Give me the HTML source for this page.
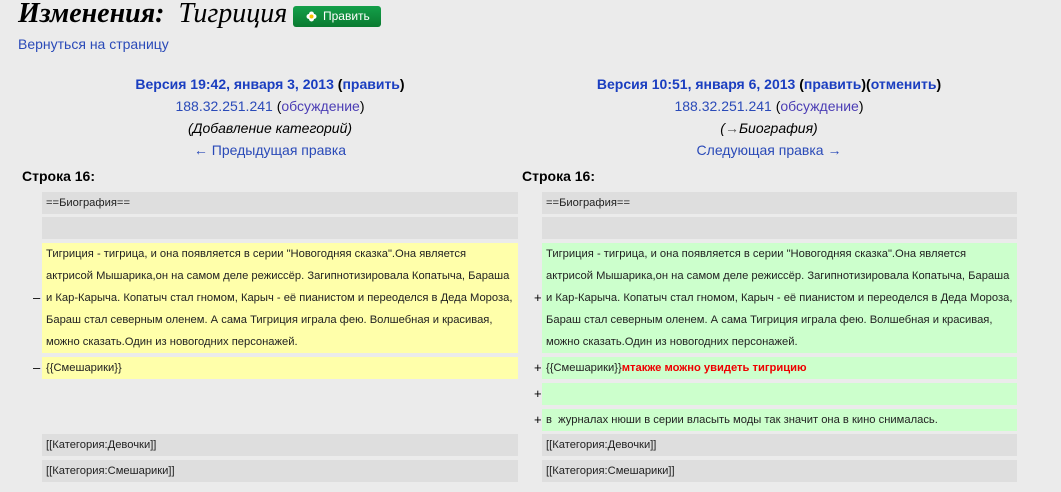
<!DOCTYPE html>
<html><head><meta charset="utf-8"><style>
body{margin:0;width:1061px;height:492px;background:#ebebeb;font-family:"Liberation Sans",Arial,sans-serif;position:relative;overflow:hidden;color:#000}
.a{position:absolute}
h1{position:absolute;left:18px;top:-2px;margin:0;font-family:"Liberation Serif",serif;font-style:italic;font-weight:normal;font-size:28px;white-space:nowrap}
.btn{position:absolute;left:293px;top:6px;width:88px;height:21px;background:linear-gradient(#14a04a,#0a7a30);border-radius:3px;color:#fff;font-size:12px;line-height:21px}
.btn span{position:absolute;left:30px}
a{color:#2a4ab8;text-decoration:none}
.hd{position:absolute;width:400px;text-align:center;font-size:14px;line-height:22px}
.hd b a{color:#1a3ec0}
.row{position:absolute;height:22px;font-size:11.2px;line-height:22px;padding-left:4px;box-sizing:border-box;white-space:nowrap;overflow:hidden;color:#222}
.c{background:#dedede}.y{background:#ffffaa;}.g{background:#ccffcc}
.L{left:42px;width:476px}.R{left:542px;width:475px}
.m{position:absolute;font-size:13px;line-height:22px}
.st{position:absolute;font-weight:bold;font-size:14px;top:168px}
</style></head><body>
<h1><b>Изменения:</b>&nbsp; Тигриция</h1>
<div class="btn"><svg class="a" style="left:13px;top:5px" width="11" height="11" viewBox="0 0 11 11"><circle cx="5.5" cy="3" r="2.5" fill="#fff"/><circle cx="3" cy="5.5" r="2.5" fill="#fff"/><circle cx="8" cy="5.5" r="2.5" fill="#fff"/><circle cx="5.5" cy="8" r="2.5" fill="#fff"/><circle cx="5.5" cy="5.5" r="2" fill="#f5c400"/></svg><span>Править</span></div>
<a class="a" style="left:18px;top:36px;font-size:14px">Вернуться на страницу</a>

<div class="hd" style="left:70px;top:73px"><b><a>Версия 19:42, января 3, 2013</a> (<a>править</a>)</b><br><a>188.32.251.241</a> (<a style="color:#4b3db5">обсуждение</a>)<br><i>(Добавление категорий)</i><br><a>← Предыдущая правка</a></div>
<div class="hd" style="left:569px;top:73px"><b><a>Версия 10:51, января 6, 2013</a> (<a>править</a>)(<a>отменить</a>)</b><br><a>188.32.251.241</a> (<a style="color:#4b3db5">обсуждение</a>)<br><i>(<a style="color:#555">→</a>Биография)</i><br><a>Следующая правка →</a></div>

<div class="st" style="left:22px">Строка 16:</div>
<div class="st" style="left:522px">Строка 16:</div>

<div class="row c L" style="top:192px">==Биография==</div>
<div class="row c L" style="top:217px"></div>
<div class="row y L" style="top:243px;height:110px">Тигриция - тигрица, и она появляется в серии "Новогодняя сказка".Она является<br>актрисой Мышарика,он на самом деле режиссёр. Загипнотизировала Копатыча, Бараша<br>и Кар-Карыча. Копатыч стал гномом, Карыч - её пианистом и переоделся в Деда Мороза,<br>Бараш стал северным оленем. А сама Тигриция играла фею. Волшебная и красивая,<br>можно сказать.Один из новогодних персонажей.</div>
<div class="m" style="left:33px;top:287px">–</div>
<div class="row y L" style="top:357px">{{Смешарики}}</div>
<div class="m" style="left:33px;top:357px">–</div>
<div class="row c L" style="top:434px">[[Категория:Девочки]]</div>
<div class="row c L" style="top:460px">[[Категория:Смешарики]]</div>

<div class="row c R" style="top:192px">==Биография==</div>
<div class="row c R" style="top:217px"></div>
<div class="row g R" style="top:243px;height:110px">Тигриция - тигрица, и она появляется в серии "Новогодняя сказка".Она является<br>актрисой Мышарика,он на самом деле режиссёр. Загипнотизировала Копатыча, Бараша<br>и Кар-Карыча. Копатыч стал гномом, Карыч - её пианистом и переоделся в Деда Мороза,<br>Бараш стал северным оленем. А сама Тигриция играла фею. Волшебная и красивая,<br>можно сказать.Один из новогодних персонажей.</div>
<div class="m" style="left:534px;top:287px">+</div>
<div class="row g R" style="top:357px">{{Смешарики}}<b style="color:#e00">мтакже можно увидеть тигрицию</b></div>
<div class="m" style="left:534px;top:357px">+</div>
<div class="row g R" style="top:383px"></div>
<div class="m" style="left:534px;top:383px">+</div>
<div class="row g R" style="top:409px">в &nbsp;журналах нюши в серии власыть моды так значит она в кино снималась.</div>
<div class="m" style="left:534px;top:409px">+</div>
<div class="row c R" style="top:434px">[[Категория:Девочки]]</div>
<div class="row c R" style="top:460px">[[Категория:Смешарики]]</div>
</body></html>
